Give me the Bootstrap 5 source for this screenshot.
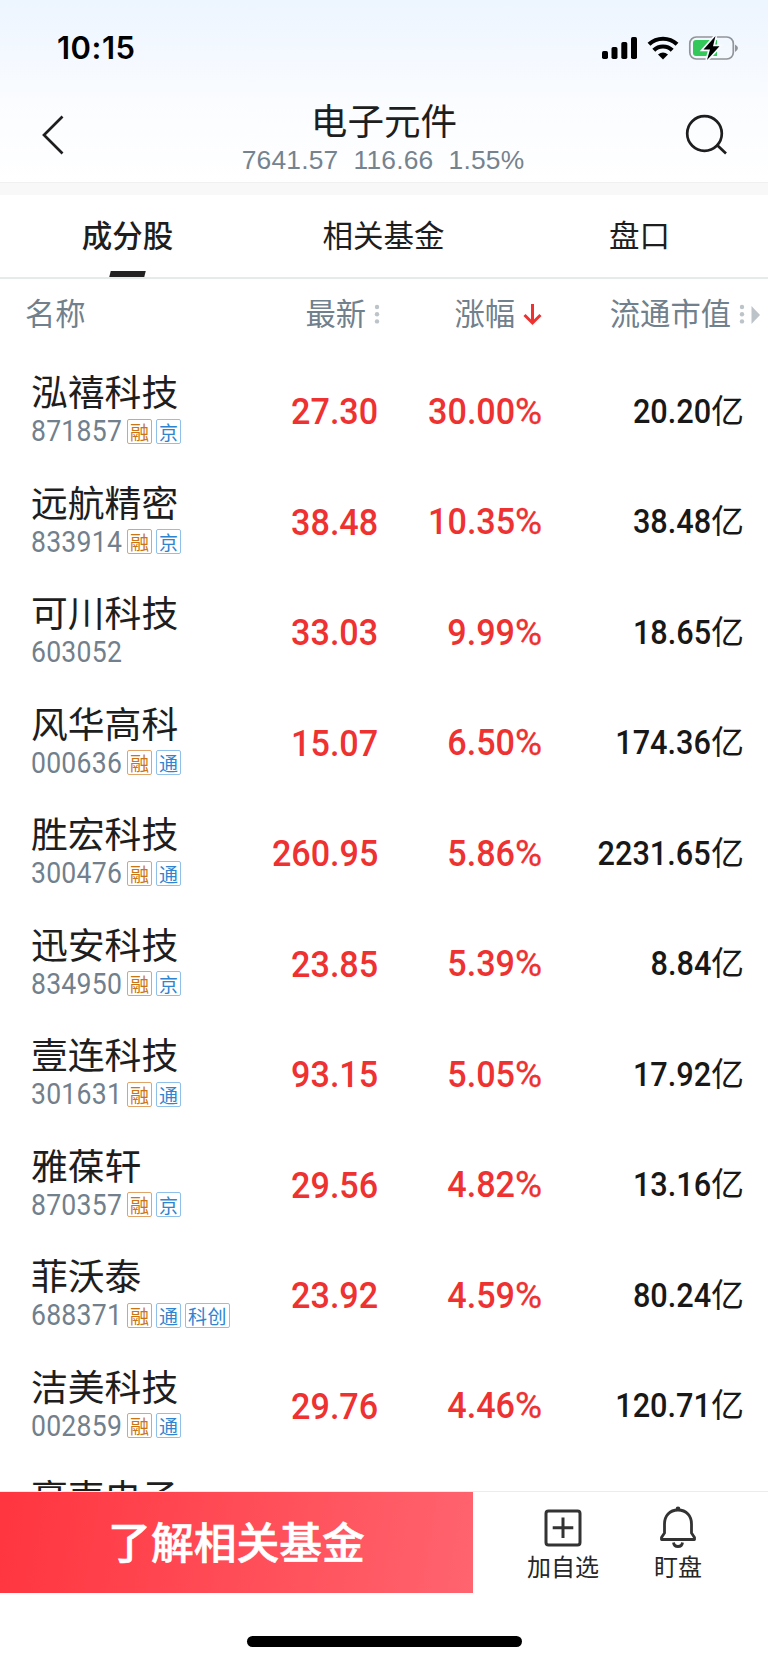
<!DOCTYPE html>
<html lang="zh-CN">
<head>
<meta charset="utf-8">
<meta name="viewport" content="width=device-width, initial-scale=1">
<title>电子元件</title>
<link href="https://cdn.jsdelivr.net/npm/bootstrap@5.3.0/dist/css/bootstrap.min.css" rel="stylesheet">
<style>
  body { font-family: "Noto Sans CJK SC", sans-serif; color: #1e1e1e; background: #fff; }
  .screen { height: 1663px; }
  .top { height: 183px; background: linear-gradient(#edf5ff, #fafcff 55%, #fff); border-bottom: 1px solid #f0f0f0; }
  .status { height: 95px; padding: 0 29px 0 57px; }
  .clock { font: 600 31px/1 Inter, sans-serif; color: #000; letter-spacing: .5px; }
  .titlebar { height: 80px; padding: 0 40px; }
  .title { font-size: 36.6px; line-height: 40px; font-weight: 400; }
  .quote { font: 26.4px/30px "Liberation Sans", sans-serif; color: #75838f; white-space: pre; letter-spacing: .2px; margin: 5px 2px 0 0; }
  .strip { height: 12px; background: #f8f8f8; }
  .tabs { height: 84px; border-bottom: 2px solid #e6eaeb; font-size: 30.5px; line-height: 40px; }
  .tabs .nav-link { color: #1e1e1e; padding: 19px 1px 0 0; height: 82px; border-radius: 0; }
  .tabs .active { font-weight: 500; }
  .tabs .active::after { content: ""; display: block; width: 35px; height: 6px; margin: 17px auto 0; background: #222; transform: skewX(-14deg); }
  .cols { height: 76px; color: #70808c; font-size: 30.3px; line-height: 40px; padding-top: 13px; }
  .c-name { width: 230px; padding-left: 31px; }
  .cols .c-name { padding-left: 25px; }
  .c-last { width: 148px; }
  .c-chg { width: 164px; }
  .c-cap { width: 202px; }
  .cols .c-last { width: 151px; }
  .cols .c-chg { width: 161px; }
  .cols .c-cap { padding-right: 7px; }
  .sort { margin-top: 12px; }
  .stock { height: 110.5px; }
  .stock .c-name { padding-bottom: 4px; }
  .nm { font-size: 36.8px; line-height: 41px; margin-bottom: 5px; }
  .code { font: 400 28.6px/30px Roboto, sans-serif; color: #71808c; letter-spacing: .25px; width: 96px; transform: scaleX(.93); transform-origin: left; }
  .tag { font-size: 19px; line-height: 23px; height: 25px; padding: 0 2px; border: 1px solid #8fc0ea; color: #2f84d0; border-radius: 2px; }
  .tag.margin { border-color: #e0a469; color: #cb7413; }
  .tag.wide { letter-spacing: .5px; }
  .num { font: 500 37.3px/44px Roboto, sans-serif; color: #ee3131; padding-top: 2px; }
  .num b, .cap b { display: inline-block; font-weight: 500; transform: scaleX(.915); transform-origin: right; }
  .num span { font-weight: 400; margin-left: 0; font-size: 37px; display: inline-block; -webkit-text-stroke: .3px #ee3131; }
  .cap { font: 500 33px/44px Roboto, "Noto Sans CJK SC", sans-serif; color: #181818; }
  .cap b { transform: scaleX(.93); }
  .cap span { font: 400 33px/44px "Noto Sans CJK SC", sans-serif; }
  .list { height: 1212px; }
  .dock { height: 102px; border-top: 1px solid #ececec; }
  .cta { width: 473px; border: 0; border-radius: 0; padding: 0 0 4px; font-family: "Noto Sans CJK SC", sans-serif; font-size: 42.8px; font-weight: 500; line-height: 1; color: #fff; background: linear-gradient(100deg, #ff353f, #ff646f); -webkit-text-stroke: .6px #fff; }
  .act { font-size: 24px; line-height: 28px; color: #262626; width: 180px; padding-top: 16px; }
  .act + .act { width: 50px; padding-top: 14px; }
  .act svg { display: block; margin: 0 auto 4px; }
  .home { width: 275px; height: 11px; border-radius: 6px; background: #000; margin-top: 43px; }
</style>
</head>
<body>
<div class="screen d-flex flex-column overflow-hidden">
  <header class="top flex-shrink-0">
    <div class="status d-flex align-items-center justify-content-between">
      <span class="clock">10:15</span>
      <svg width="138" height="26" viewBox="0 0 138 26">
        <rect x="1" y="16" width="6" height="8" rx="1.7"/><rect x="10.5" y="12" width="6" height="12" rx="1.7"/>
        <rect x="20.3" y="7" width="6" height="17" rx="1.7"/><rect x="30" y="2" width="6" height="22" rx="1.7"/>
        <g fill="none" stroke="#000" stroke-width="4.200"><path d="M48 9.300A20.500 20.500 0 0 1 76 9.300"/><path d="M52.800 15.300A13 13 0 0 1 71.200 15.300"/></g>
        <path d="M57 19.500Q62 15.500 67 19.500L62 24.500Z"/>
        <rect x="88.800" y="2" width="43.500" height="22" rx="6.500" fill="none" stroke="#929598" stroke-width="1.700"/>
        <path d="M134 9.500Q137 11 137 13T134 17Z" fill="#929598"/>
        <path d="M95 5h21v16H95q-3 0-3-3V8q0-3 3-3z" fill="#34c759"/>
        <path d="M114.500 1L102.500 14.500H109L106 25L118.500 11.200H112Z" fill="#000" stroke="#f7fbff" stroke-width="3.400" paint-order="stroke"/>
      </svg>
    </div>
    <div class="titlebar d-flex align-items-center justify-content-between">
      <svg width="44" height="42" viewBox="0 0 44 42"><path d="M22.500 2.500L4 21L22.500 39.500" fill="none" stroke="#1e1e1e" stroke-width="2.700"/></svg>
      <div class="text-center pt-1">
        <h1 class="title m-0">电子元件</h1>
        <div class="quote">7641.57  116.66  1.55%</div>
      </div>
      <svg width="44" height="42" viewBox="0 0 44 42"><g fill="none" stroke="#1e1e1e" stroke-width="2.700"><circle cx="20.500" cy="19.500" r="17.300"/><path d="M33 31L42 39.500"/></g></svg>
    </div>
  </header>
  <div class="strip flex-shrink-0"></div>
  <nav class="tabs nav nav-justified flex-shrink-0 flex-nowrap">
    <a class="nav-link active w-100">成分股</a><a class="nav-link w-100">相关基金</a><a class="nav-link w-100">盘口</a>
  </nav>
  <main class="list flex-shrink-0 overflow-hidden">
    <div class="cols d-flex">
      <div class="c-name">名称</div>
      <div class="c-last d-flex justify-content-end gap-2">最新<svg class="sort" width="7" height="20" viewBox="0 0 7 20"><g fill="#bcc4ca"><circle cx="3" cy="3" r="2.200"/><circle cx="3" cy="10.200" r="2.200"/><circle cx="3" cy="17.400" r="2.200"/></g></svg></div>
      <div class="c-chg d-flex justify-content-end gap-2">涨幅<svg class="sort" width="19" height="22" viewBox="0 0 19 22"><path d="M9.500 0V19M1.500 11L9.500 19L17.500 11" fill="none" stroke="#ee3131" stroke-width="3"/></svg></div>
      <div class="c-cap d-flex justify-content-end gap-2 flex-grow-1">流通市值<svg class="sort" width="22" height="20" viewBox="0 0 22 20"><g fill="#bcc4ca"><circle cx="3" cy="3" r="2.200"/><circle cx="3" cy="10.200" r="2.200"/><circle cx="3" cy="17.400" r="2.200"/><path d="M12.500 2V20L21 11Z"/></g></svg></div>
    </div>
    <div id="rows"></div>
  </main>
  <footer class="flex-shrink-0">
    <div class="dock d-flex">
      <button class="cta btn">了解相关基金</button>
      <div class="act text-center">
        <svg width="40" height="40" viewBox="0 0 40 40"><g fill="none" stroke="#333" stroke-width="3"><rect x="3" y="3" width="34" height="34" rx="2.500"/><path d="M20 9.500V30M9.700 19.800H30.300"/></g></svg>加自选
      </div>
      <div class="act text-center text-nowrap">
        <svg width="40" height="42" viewBox="0 0 40 42"><g fill="none" stroke="#333" stroke-width="2.800" stroke-linejoin="round"><path d="M20 4C11.500 4 6.500 10 6.500 18V27L3.500 31.500V33.500H36.500V31.500L33.500 27V18C33.500 10 28.500 4 20 4Z"/><path d="M15.500 36.500Q16 40.500 20 40.500T24.500 36.500"/></g><circle cx="20" cy="2.800" r="2.300" fill="#333"/></svg>盯盘
      </div>
    </div>
    <div class="home mx-auto"></div>
  </footer>
</div>
<script>
  const stocks = [
    ["泓禧科技","871857","融京","27.30","30.00","20.20"],
    ["远航精密","833914","融京","38.48","10.35","38.48"],
    ["可川科技","603052","","33.03","9.99","18.65"],
    ["风华高科","000636","融通","15.07","6.50","174.36"],
    ["胜宏科技","300476","融通","260.95","5.86","2231.65"],
    ["迅安科技","834950","融京","23.85","5.39","8.84"],
    ["壹连科技","301631","融通","93.15","5.05","17.92"],
    ["雅葆轩","870357","融京","29.56","4.82","13.16"],
    ["菲沃泰","688371","融通科","23.92","4.59","80.24"],
    ["洁美科技","002859","融通","29.76","4.46","120.71"],
    ["豪声电子","","","","",""]
  ];
  document.getElementById("rows").innerHTML = stocks.map(([n, code, tags, last, chg, cap]) => `
    <div class="stock d-flex align-items-center">
      <div class="c-name"><div class="nm text-nowrap">${n}</div>
        <div class="d-flex align-items-center text-nowrap" style="height:30px"><span class="code">${code}</span>
        <span class="d-flex" style="gap:4px">${[...tags].map(t => `<span class="tag${t === "融" ? " margin" : t === "科" ? " wide" : ""}">${t === "科" ? "科创" : t}</span>`).join("")}</span></div></div>
      <div class="c-last num text-end"><b>${last}</b></div>
      <div class="c-chg num text-end">${chg && "<b>" + chg + "</b><span>%</span>"}</div>
      <div class="c-cap cap text-end">${cap && "<b>" + cap + "</b><span>亿</span>"}</div>
    </div>`).join("");
</script>
<script src="https://cdn.jsdelivr.net/npm/bootstrap@5.3.0/dist/js/bootstrap.bundle.min.js"></script>
</body>
</html>
